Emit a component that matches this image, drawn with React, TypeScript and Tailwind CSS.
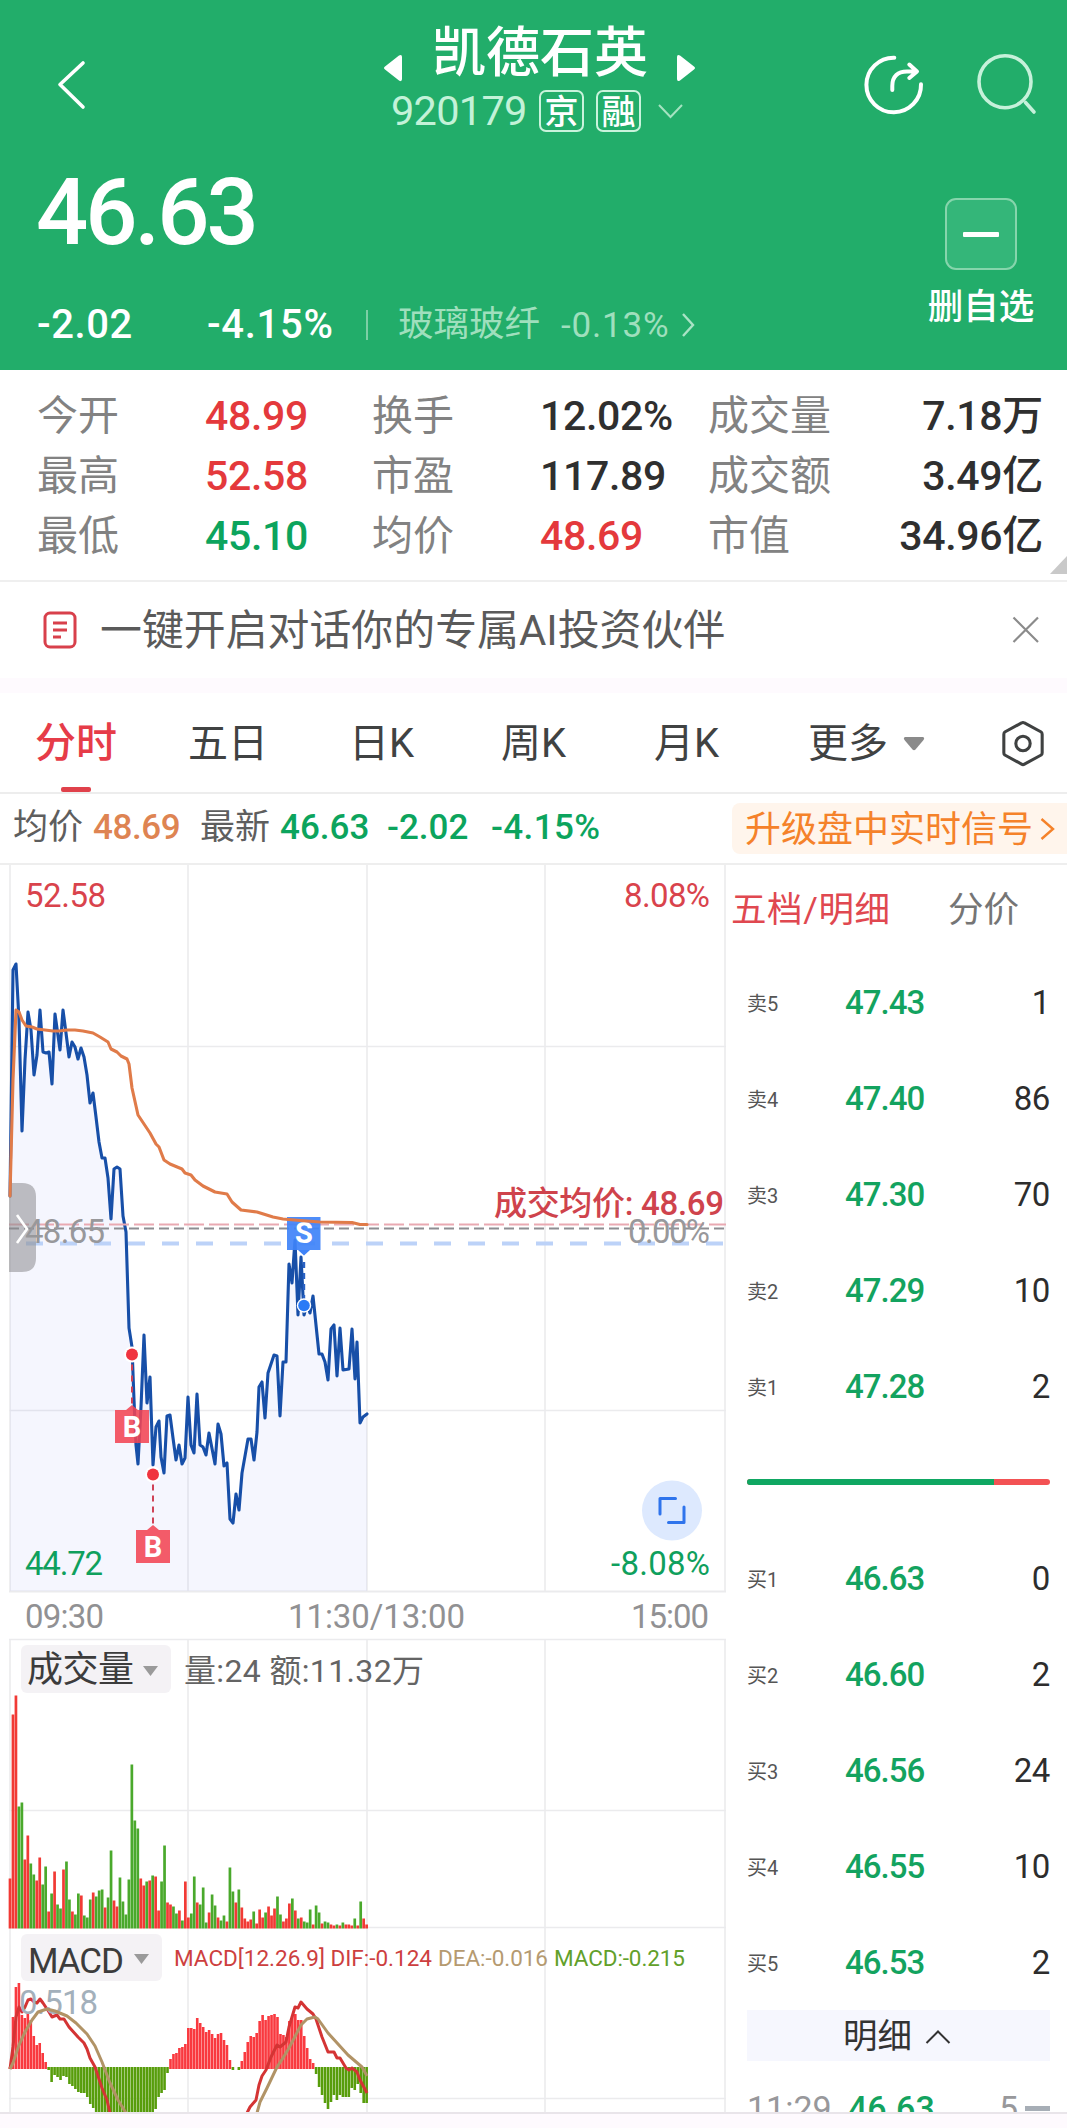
import React from 'react';

type Point = [number, number];

const toPath = (points: Point[]) => points.map(([x, y], i) => `${i ? 'L' : 'M'}${x} ${y}`).join(' ');

const priceLine: Point[] = [
    [10, 1196], [13, 970], [16, 964], [19, 1020], [22, 1131], [25, 1060], [28, 1012], [31, 1030], [34, 1075], [37, 1055],
    [40, 1010], [43, 1052], [46, 1053], [49, 1052], [52, 1084], [55, 1014], [60, 1050], [63, 1010], [66, 1033], [69, 1057],
    [72, 1042], [75, 1047], [78, 1059], [81, 1048], [84, 1057], [87, 1075], [90, 1103], [93, 1093], [96, 1117], [99, 1142],
    [102, 1158], [105, 1158], [108, 1178], [111, 1219], [114, 1169], [117, 1167], [120, 1169], [123, 1216], [126, 1232],
    [129, 1328], [132, 1347], [134, 1400], [136, 1445], [138, 1464], [141, 1407], [144, 1335], [147, 1403], [150, 1377],
    [153, 1465], [156, 1427], [159, 1421], [161, 1457], [164, 1473], [167, 1416], [170, 1415], [173, 1438], [176, 1460],
    [179, 1445], [182, 1464], [185, 1458], [188, 1397], [191, 1445], [194, 1453], [197, 1394], [200, 1445], [203, 1447],
    [206, 1455], [209, 1433], [215, 1464], [218, 1424], [221, 1434], [224, 1466], [227, 1463], [230, 1519], [233, 1523],
    [236, 1494], [239, 1510], [242, 1473], [248, 1439], [251, 1439], [254, 1460], [257, 1432], [259, 1387], [262, 1382],
    [265, 1418], [268, 1373], [274, 1355], [277, 1356], [280, 1416], [283, 1362], [286, 1362], [289, 1264], [292, 1283],
    [295, 1240], [298, 1315], [301, 1257], [304, 1315], [307, 1303], [310, 1313], [313, 1296], [319, 1354], [322, 1354],
    [325, 1362], [328, 1380], [331, 1329], [334, 1325], [337, 1376], [340, 1328], [343, 1370], [349, 1369], [352, 1329],
    [355, 1379], [357, 1342], [360, 1423], [363, 1417], [367, 1414],
];

const averageLine: Point[] = [
    [10, 1196], [13, 1080], [16, 1010], [19, 1012], [22, 1020], [26, 1026], [32, 1027], [37, 1029], [53, 1031], [59, 1031],
    [67, 1030], [75, 1030], [83, 1031], [93, 1033], [100, 1037], [108, 1042], [111, 1049], [117, 1052], [121, 1056],
    [127, 1059], [129, 1064], [132, 1088], [138, 1115], [150, 1133], [156, 1144], [159, 1147], [164, 1160], [170, 1164],
    [182, 1169], [185, 1173], [191, 1175], [195, 1180], [203, 1186], [215, 1192], [227, 1194], [232, 1202], [241, 1210],
    [257, 1212], [273, 1217], [283, 1219], [300, 1220.5], [320, 1222], [352, 1222.5], [360, 1224.5], [367, 1224.5],
];

// one bar per minute, negative = down minute
const volumes = [
    50, 214, 233, -122, -126, 69, 93, -65, -54, 48, 71, -44, -62, 17, -35, 57, -24, -20, 59, -67,
    -29, 17, -14, -35, 33, -13, -11, -29, 36, -32, -38, -39, 21, -31, -78, 28, 22, -51, -27, -14,
    -49, -164, -108, -100, 50, 43, -47, 48, -53, 52, 18, -47, -83, 26, 24, -22, -15, 18, -8, 47,
    11, -15, -52, 26, -24, -41, -6, 16, -34, -23, 11, -8, -13, 7, -61, -37, 26, -39, 21, 10,
    7, 9, -17, 5, 19, 11, -16, 22, 13, 20, -32, -14, 7, 10, 25, -30, 18, -10, 11, -7,
    -6, -19, 4, -23, -16, 5, -7, -6, 4, 3, -4, 3, -6, 4, 4, 3, -10, 3, -27, 10, 4,
];

const macdBars = [
    2, 52, 82, 86, 54, 51, 56, 49, 33, 24, 26, 16, 7, -3, -15, -8, -10, -13, -9, -10,
    -17, -19, -22, -25, -26, -26, -30, -37, -41, -46, -46, -46, -46, -46, -46, -46, -46, -46, -46, -46,
    -46, -46, -46, -46, -46, -46, -46, -46, -46, -42, -30, -26, -23, -6, 10, 15, 16, 21, 22, 25,
    41, 41, 40, 51, 46, 42, 37, 39, 35, 31, 35, 36, 29, 24, 9, -3, 0, -3, 8, 17,
    27, 33, 32, 36, 48, 54, 49, 53, 54, 55, 52, 35, 34, 32, 48, 54, 55, 49, 49, 33,
    21, 10, 6, -7, -20, -28, -36, -42, -35, -28, -33, -28, -30, -30, -30, -21, -23, -17, -26, -36, -36,
];

const difLine: Point[][] = [
    [
        [10, 2069], [13, 2047], [16, 2017], [19, 2007], [22, 2012], [25, 2007], [28, 2000], [31, 1999], [34, 2002], [37, 2003],
        [40, 1999], [43, 2003], [49, 2012], [52, 2017], [57, 2015], [60, 2019], [64, 2019], [69, 2027], [78, 2037], [84, 2043],
        [87, 2049], [90, 2058], [95, 2067], [102, 2088], [107, 2100], [110, 2113],
    ],
    [
        [247, 2113], [250, 2107], [256, 2100], [259, 2085], [262, 2076], [266, 2070], [271, 2057], [277, 2045], [280, 2047],
        [286, 2042], [289, 2027], [295, 2007], [298, 2008], [301, 2002], [307, 2009], [313, 2014], [316, 2019], [322, 2037],
        [328, 2052], [334, 2052], [337, 2058], [340, 2058], [346, 2068], [349, 2070], [352, 2068], [357, 2072], [360, 2080],
        [367, 2093],
    ],
];

const deaLine: Point[][] = [
    [
        [10, 2069], [13, 2063], [19, 2045], [25, 2032], [32, 2020], [38, 2012], [47, 2009], [55, 2011], [67, 2016], [76, 2023],
        [87, 2034], [95, 2046], [102, 2062], [110, 2083], [118, 2100], [126, 2113],
    ],
    [
        [257, 2113], [260, 2102], [267, 2088], [277, 2067], [283, 2058], [289, 2048], [301, 2025], [307, 2019], [315, 2017],
        [318, 2019], [328, 2033], [348, 2055], [362, 2067], [367, 2076],
    ],
];

const barX = (i: number) => 10 + i * 2.972;

const COLUMNS = [10, 188, 367, 545, 725];

const asks = [
    ['卖5', '47.43', '1'],
    ['卖4', '47.40', '86'],
    ['卖3', '47.30', '70'],
    ['卖2', '47.29', '10'],
    ['卖1', '47.28', '2'],
];

const bids = [
    ['买1', '46.63', '0'],
    ['买2', '46.60', '2'],
    ['买3', '46.56', '24'],
    ['买4', '46.55', '10'],
    ['买5', '46.53', '2'],
];

const Header: React.FC = () => (
    <header className="h-[370px] bg-[#22ad6a] text-white">
        <div className="flex h-[150px] items-start">
            <svg width="110" height="150" fill="none" stroke="white" strokeWidth="3.6" strokeLinecap="round" strokeLinejoin="round">
                <path d="M83 63 L60 84.5 L83 107" />
            </svg>
            <div className="w-[740px] pl-[273px] pt-[26px]">
                <div className="flex items-center">
                    <svg width="20" height="28" className="mt-[28px]" fill="white">
                        <path d="M17 2 V26 Q19 28 16 26.500 L2 15.500 Q0 14 2 12.500 L16 1.500 Q19 0 19 3 V25 Q19 28 16 26.500 Z" />
                    </svg>
                    <h1 className="ml-[29px] w-[215px] text-[54px] leading-[56px] font-medium whitespace-nowrap">凯德石英</h1>
                    <svg width="20" height="28" className="ml-[29px] mt-[28px]" fill="white">
                        <path d="M1 3 Q1 0 4 1.500 L18 12.500 Q20 14 18 15.500 L4 26.500 Q1 28 1 25 Z" />
                    </svg>
                </div>
                <div className="mt-[8px] flex h-[42px] items-center pl-[8px]">
                    <span className="w-[148px] text-[41.500px] leading-none tracking-[-0.7px] text-[#c3f2d8]">920179</span>
                    <span className="flex h-[42px] w-[45px] items-center justify-center rounded-[7px] border-2 border-[#c9f3dc] pt-[1px] text-[34px] leading-none font-medium">京</span>
                    <span className="ml-[12px] flex h-[42px] w-[45px] items-center justify-center rounded-[7px] border-2 border-[#c9f3dc] pt-[1px] text-[34px] leading-none font-medium">融</span>
                    <svg width="26" height="16" className="ml-[17px]" fill="none" stroke="#a5e3c1" strokeWidth="2">
                        <path d="M1 2 L12.500 14 L24 2" />
                    </svg>
                </div>
            </div>
            <svg width="217" height="150" fill="none" stroke="white" strokeWidth="4" strokeLinecap="round" strokeLinejoin="round">
                <path d="M44.300 57.700 A27.300 27.300 0 1 0 71 84.300" />
                <path d="M42.300 90 V86 C42.300 76 48 71.400 57 71.400 H66 M59.300 64.500 L67 71.400 L59.300 78" />
                <g stroke="#c6f1da" strokeWidth="3.6">
                    <circle cx="155" cy="81.700" r="26" />
                    <path d="M175.500 102.500 L184 112" />
                </g>
            </svg>
        </div>
        <div className="flex h-[220px] justify-between pl-[36px]">
            <div>
                <div className="pt-[13px] text-[92px] leading-[100px] font-medium tracking-[-3px]">46.63</div>
                <div className="mt-[42px] flex h-[40px] items-center pl-[1px] leading-none">
                    <span className="w-[170px] text-[40px] font-medium tracking-[0.6px]">-2.02</span>
                    <span className="w-[159px] text-[40px] font-medium tracking-[0.7px]">-4.15%</span>
                    <span className="h-[30px] w-[2px] bg-[#7ccfa5]" />
                    <span className="ml-[30px] w-[163px] text-[35.500px] text-[#9fdfbd]">玻璃玻纤</span>
                    <span className="w-[120px] text-[35px] tracking-[0.8px] text-[#9fdfbd]">-0.13%</span>
                    <svg width="14" height="26" fill="none" stroke="#a9e3c5" strokeWidth="2.4">
                        <path d="M2 2 L12 13 L2 24" />
                    </svg>
                </div>
            </div>
            <div className="flex w-[173px] flex-col items-center pl-[1px] pt-[48px]">
                <div className="flex h-[72px] w-[72px] items-center justify-center rounded-[11px] border-2 border-[#86d5ac] bg-[#34b679]">
                    <span className="h-[5px] w-[36px] rounded-[1px] bg-white" />
                </div>
                <span className="mt-[19px] text-[35.500px] leading-[36px] font-medium">删自选</span>
            </div>
        </div>
    </header>
);

interface StatProps {
    label: string;
    value: string;
    tone?: string;
    right?: boolean;
}

const Stat: React.FC<StatProps> = ({ label, value, tone = 'text-[#2f2f2f]', right }) => (
    <div className="flex h-[60px] items-center">
        <span className={`text-[41px] text-[#828282] ${right ? 'w-[130px]' : 'w-[168px]'}`}>{label}</span>
        <span className={`text-[41px] font-medium tracking-[-0.3px] whitespace-nowrap ${tone} ${right ? 'flex-1 text-right' : ''}`}>{value}</span>
    </div>
);

const Stats: React.FC = () => (
    <section className="relative grid h-[212px] grid-cols-[335px_336px_335px] content-start border-b-2 border-[#efefef] pl-[37px] pt-[16px] leading-[60px]">
        <Stat label="今开" value="48.99" tone="text-[#e4393c]" />
        <Stat label="换手" value="12.02%" />
        <Stat label="成交量" value="7.18万" right />
        <Stat label="最高" value="52.58" tone="text-[#e4393c]" />
        <Stat label="市盈" value="117.89" />
        <Stat label="成交额" value="3.49亿" right />
        <Stat label="最低" value="45.10" tone="text-[#0ca45d]" />
        <Stat label="均价" value="48.69" tone="text-[#e4393c]" />
        <Stat label="市值" value="34.96亿" right />
        <svg width="17" height="18" className="absolute right-0 bottom-[6px]" fill="#c9c9c9">
            <path d="M17 0 V18 H0 Z" />
        </svg>
    </section>
);

const Banner: React.FC = () => (
    <section className="flex h-[96px] items-center pl-[43px]">
        <svg width="34" height="38" fill="none" stroke="#d8404b" strokeWidth="3">
            <rect x="2" y="2" width="30" height="34" rx="5" />
            <path d="M10 12 H24 M10 19 H24 M10 26 H18" />
        </svg>
        <span className="ml-[23px] w-[912px] pt-[2px] text-[41.900px] text-[#5a5a5a]">一键开启对话你的专属AI投资伙伴</span>
        <svg width="28" height="28" fill="none" stroke="#8b8b8b" strokeWidth="2.2">
            <path d="M1.500 1.500 L26 26 M26 1.500 L1.500 26" />
        </svg>
    </section>
);

const Tabs: React.FC = () => (
    <nav className="relative mt-[15px] flex h-[101px] items-center border-b-2 border-[#ededed] bg-white pl-[35px] pt-[2px] text-[40px] text-[#404242]">
        <span className="w-[153px] text-[41px] font-medium text-[#e63c48]">分时</span>
        <span className="w-[161px]">五日</span>
        <span className="w-[152px]">日K</span>
        <span className="w-[153px]">周K</span>
        <span className="w-[154px]">月K</span>
        <span>更多</span>
        <svg width="22" height="14" className="ml-[15px]" fill="#8a8a8a">
            <path d="M2 0 H20 Q22 1 20.500 3 L12.500 12.500 Q11 14 9.500 12.500 L1.500 3 Q0 1 2 0 Z" />
        </svg>
        <svg width="46" height="48" viewBox="0 0 48 50" className="ml-[75px]" fill="none" stroke="#3f4141" strokeWidth="3.2" strokeLinejoin="round">
            <path d="M22.500 3 Q24 2 25.500 3 L43 12.500 Q44 13.500 44 15 V34 Q44 35.500 43 36.500 L25.500 46 Q24 47 22.500 46 L5 36.500 Q4 35.500 4 34 V15 Q4 13.500 5 12.500 Z" />
            <circle cx="24" cy="24.500" r="7.500" />
        </svg>
        <span className="absolute bottom-0 left-[61px] h-[5px] w-[30px] rounded-[2px] bg-[#e0414b]" />
    </nav>
);

const QuoteBar: React.FC = () => (
    <div className="flex h-[71px] items-center justify-between border-b-2 border-[#eee] pl-[13px] leading-none">
        <div className="flex items-center pb-[2px] text-[35px] font-medium text-[#0ca45d]">
            <span className="w-[80px] font-normal text-[#5e5e5e]">均价</span>
            <span className="w-[107px] tracking-[-0.4px] text-[#de8452]">48.69</span>
            <span className="w-[80px] font-normal text-[#5e5e5e]">最新</span>
            <span className="w-[107px]">46.63</span>
            <span className="w-[104px]">-2.02</span>
            <span className="tracking-[0.4px]">-4.15%</span>
        </div>
        <div className="flex h-[51px] w-[335px] items-center rounded-l-[8px] bg-[#fff5ec] pt-[2px] pl-[13px] text-[36px] text-[#f5822a]">
            升级盘中实时信号
            <svg width="15" height="24" className="mb-[2px] ml-[7px]" fill="none" stroke="#f5822a" strokeWidth="2.4">
                <path d="M1.500 2 L13 12 L1.500 22" />
            </svg>
        </div>
    </div>
);

interface LabelProps {
    x: number;
    y: number;
    w: number;
    size?: number;
    fill: string;
    children: string;
}

// chart caption stretched to a fixed run length
const Label: React.FC<LabelProps> = ({ x, y, w, size = 33, fill, children }) => (
    <text x={x} y={y} fontSize={size} fill={fill} textLength={w} lengthAdjust="spacing">
        {children}
    </text>
);

interface MarkerProps {
    x: number;
    dotY: number;
    boxY: number;
}

const BuyMarker: React.FC<MarkerProps> = ({ x, dotY, boxY }) => (
    <g>
        <circle cx={x} cy={dotY} r="8" fill="white" />
        <circle cx={x} cy={dotY} r="6" fill="#f0343f" />
        <path d={`M${x} ${dotY + 10} V${boxY - 4}`} stroke="#cf4256" strokeWidth="2" strokeDasharray="6 5" />
        <path d={`M${x - 17} ${boxY} H${x - 6} L${x} ${boxY - 5} L${x + 6} ${boxY} H${x + 17} V${boxY + 33} H${x - 17} Z`} fill="#f24453" fillOpacity="0.87" />
        <text x={x} y={boxY + 27} textAnchor="middle" fontSize="29" fontWeight="700" fill="white">B</text>
    </g>
);

const PriceChart: React.FC = () => (
    <svg width="727" height="773" viewBox="0 865 727 773" className="block" fill="none">
        <g stroke="#ebebed" strokeWidth="1.6">
            {COLUMNS.map((x) => (
                <path key={x} d={`M${x} 864 V1592`} />
            ))}
            <path d="M9 1046.500 H726 M9 1410.500 H726" strokeWidth="1.3" />
            <path d="M9 1591.500 H726" strokeWidth="2" />
        </g>
        <path d={`${toPath(priceLine)} V1591 H10 Z`} fill="#6478f0" fillOpacity="0.065" />
        <path d={toPath(priceLine)} stroke="#174fa8" strokeWidth="3.1" strokeLinejoin="round" strokeLinecap="round" />

        <path d="M9 1224.500 H726" stroke="#e9a9b2" strokeWidth="1.8" strokeDasharray="20 5" />
        <path d="M9 1228.500 H726" stroke="#8d8d92" strokeWidth="1.8" strokeDasharray="10 5" />
        <path d="M26 1243.500 H726" stroke="#bcd2f8" strokeWidth="4" strokeDasharray="17 17" />

        <path d="M9 1183 H22 Q36 1183 36 1197 V1258 Q36 1272 22 1272 H9 Z" fill="#8a8a8e" fillOpacity="0.55" />
        <path d="M17 1215 L27 1229 L17 1243" stroke="white" strokeWidth="2.6" />

        <Label x={25} y={907} w={81} fill="#d9434c">52.58</Label>
        <Label x={624} y={907} w={86} fill="#d9434c">8.08%</Label>
        <Label x={25} y={1243} w={80} fill="#98989b">48.65</Label>
        <Label x={628} y={1243} w={82} fill="#98989b">0.00%</Label>
        <Label x={25} y={1575} w={78} fill="#0fa05d">44.72</Label>
        <Label x={611} y={1575} w={99} fill="#0fa05d">-8.08%</Label>
        <g fontWeight="500">
            <Label x={494} y={1215} w={230} fill="#cf434c">成交均价: 48.69</Label>
        </g>

        <rect x="287" y="1217" width="33.500" height="33" fill="#3f83f8" fillOpacity="0.92" />
        <path d="M298 1250 H310 L304 1255.500 Z" fill="#3f83f8" />
        <text x="304" y="1243" textAnchor="middle" fontSize="29" fontWeight="700" fill="white">S</text>
        <path d="M304 1262 V1300" stroke="#2a62c4" strokeWidth="2.400" strokeDasharray="6 5" />
        <circle cx="304" cy="1305.500" r="7.200" fill="white" />
        <circle cx="304" cy="1305.500" r="5.800" fill="#2a7bf6" />
        <path d={toPath(averageLine)} stroke="#e07b49" strokeWidth="3.1" strokeLinejoin="round" strokeLinecap="round" />

        <BuyMarker x={132} dotY={1354.5} boxY={1410} />
        <BuyMarker x={153} dotY={1474.5} boxY={1530} />

        <circle cx="672" cy="1510.500" r="30" fill="#dde9fe" />
        <path d="M660 1514 V1498.500 H675.500 M684 1507 V1522.500 H668.500" stroke="#2f74ec" strokeWidth="3" strokeLinecap="round" strokeLinejoin="round" />

        <Label x={25} y={1628} w={79} fill="#919193">09:30</Label>
        <Label x={288} y={1628} w={177} fill="#919193">11:30/13:00</Label>
        <Label x={631} y={1628} w={78} fill="#919193">15:00</Label>
    </svg>
);

const IndicatorCharts: React.FC = () => (
    <svg width="727" height="474" viewBox="0 1638 727 474" className="block" fill="none">
        <g stroke="#ebebed" strokeWidth="1.6">
            {COLUMNS.map((x) => (
                <path key={x} d={`M${x} 1639 V2112`} />
            ))}
            <path d="M9 1639.500 H726 M9 1810.500 H726 M9 1927.500 H726 M9 2098.500 H726" strokeWidth="1.3" />
        </g>

        {volumes.map((v, i) => (
            <rect key={i} x={barX(i) - 1.35} y={1928.5 - Math.abs(v)} width="2.7" height={Math.abs(v)} fill={v > 0 ? '#f13a35' : '#4aa92c'} />
        ))}
        {macdBars.map((v, i) => (
            <rect key={i} x={barX(i) - 1.3} y={v > 0 ? 2069 - v : 2067} width="2.6" height={Math.abs(v)} fill={v > 0 ? '#f9393f' : '#579d0b'} />
        ))}
        {difLine.map((points, i) => (
            <path key={i} d={toPath(points)} stroke="#d43434" strokeWidth="3" strokeLinejoin="round" />
        ))}
        <Label x={19} y={2014} w={79} fill="#a3b0bb">0.518</Label>
        {deaLine.map((points, i) => (
            <path key={i} d={toPath(points)} stroke="#b19366" strokeWidth="3" strokeLinejoin="round" />
        ))}

        <rect x="21" y="1645" width="150" height="48" rx="6" fill="#f4f2f5" />
        <Label x={27} y={1682} w={107} size={36} fill="#3c3c3c">成交量</Label>
        <path d="M143 1666 H158 L150.500 1676 Z" fill="#9a9a9a" />
        <text x="184" y="1682" fontSize="32" fill="#646464" textLength="240" lengthAdjust="spacing">
            量:24 额:11.32万
        </text>

        <rect x="21" y="1934" width="141" height="47" rx="6" fill="#f4f2f5" />
        <Label x={28} y={1973} w={96} size={35} fill="#3c3c3c">MACD</Label>
        <path d="M134 1954 H149 L141.500 1964 Z" fill="#9a9a9a" />
        <Label x={174} y={1966} w={258} size={22.5} fill="#cd3f3f">MACD[12.26.9] DIF:-0.124</Label>
        <Label x={438} y={1966} w={110} size={22.5} fill="#b59a70">DEA:-0.016</Label>
        <Label x={554} y={1966} w={131} size={22.5} fill="#62a02a">MACD:-0.215</Label>
    </svg>
);

const BookRow: React.FC<{ row: string[] }> = ({ row: [label, price, amount] }) => (
    <div className="flex h-[96px] items-center leading-none">
        <span className="w-[98px] pt-[4px] text-[20px] text-[#555]">{label}</span>
        <span className="flex-1 text-[33px] font-medium tracking-[-1px] text-[#13a35f]">{price}</span>
        <span className="text-[33px] tracking-[-0.4px] text-[#2d2d2d]">{amount}</span>
    </div>
);

const OrderBook: React.FC = () => (
    <aside className="h-[1247px] w-[340px] overflow-hidden">
        <div className="flex h-[89px] items-center pt-[3px] pl-[4px] text-[35.500px] leading-none">
            <span className="w-[217px] tracking-[0.6px] text-[#e04850]">五档/明细</span>
            <span className="text-[#757575]">分价</span>
        </div>
        <div className="pl-[20px] pr-[17px]">
            {asks.map((row) => (
                <BookRow key={row[0]} row={row} />
            ))}
            <div className="flex h-[96px] items-center">
                <div className="flex h-[6px] w-full overflow-hidden rounded-full bg-[#f35254]">
                    <span className="w-[247px] bg-[#0fa762]" />
                </div>
            </div>
            {bids.map((row) => (
                <BookRow key={row[0]} row={row} />
            ))}
            <div className="flex h-[51px] items-center bg-[#f6f7fe] pt-[2px] pl-[96px] text-[34.500px] text-[#333]">
                明细
                <svg width="26" height="16" className="ml-[13px]" fill="none" stroke="#333" strokeWidth="2">
                    <path d="M1.500 14 L13 2.500 L24.500 14" />
                </svg>
            </div>
            <div className="flex h-[94px] items-center text-[34px] leading-none">
                <span className="w-[101px] text-[#98989b]">11:29</span>
                <span className="w-[151px] font-medium text-[#13a35f]">46.63</span>
                <span className="w-[26px] text-[#98989b]">5</span>
                <span className="h-[5px] w-[25px] bg-[#a7aeb6]" />
            </div>
        </div>
    </aside>
);

export default function App() {
    return (
        <div className="h-[2128px] w-[1067px] overflow-hidden bg-white font-['Roboto','Noto_Sans_CJK_SC',sans-serif]">
            <Header />
            <Stats />
            <div className="bg-[linear-gradient(white_96px,#fefafe_96px)]">
                <Banner />
                <Tabs />
            </div>
            <QuoteBar />
            <main className="flex h-[1249px] items-start overflow-hidden border-b-2 border-[#e9e5ea]">
                <div>
                    <PriceChart />
                    <IndicatorCharts />
                </div>
                <OrderBook />
            </main>
            <footer className="h-[14px] bg-[#fefafe]" />
        </div>
    );
}
